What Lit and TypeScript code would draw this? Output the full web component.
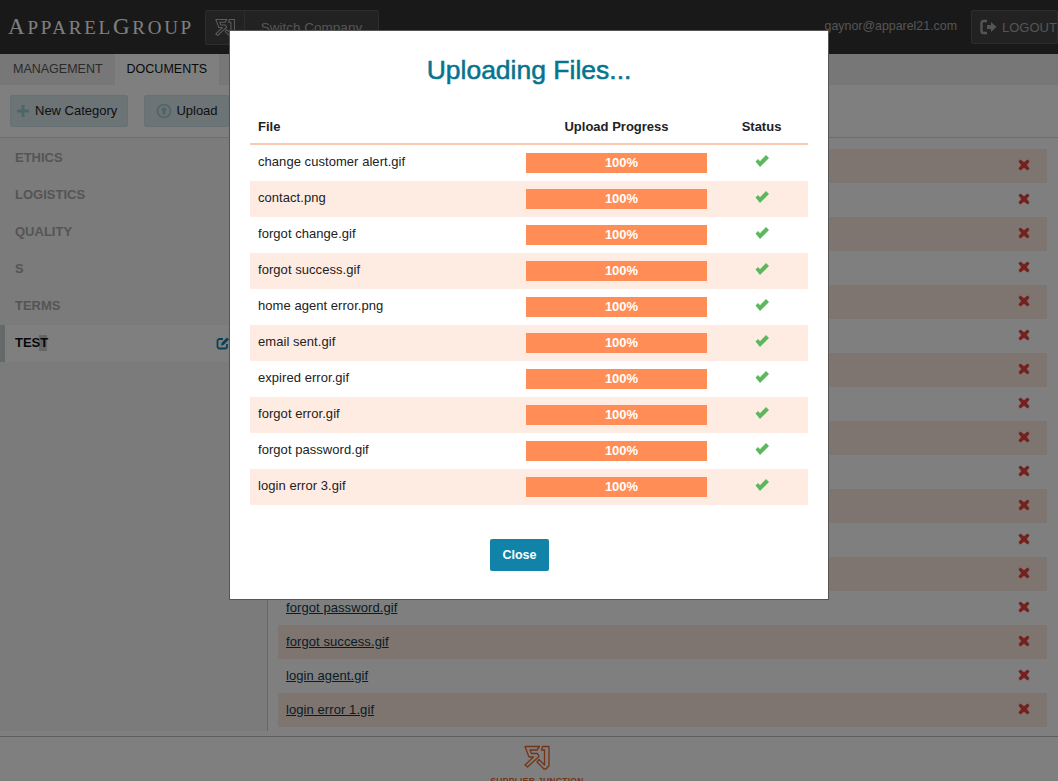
import { LitElement, html, css, svg } from "lit";
import { customElement } from "lit/decorators.js";

const logoMark = svg`<path d="M1 1.5H15.5L13 5H6L7.5 8.5H13.5L15 11.5L3.5 22L1 20L9.5 12H5Z" fill="none" stroke="currentColor" stroke-width="1.3" stroke-linejoin="round"/><path d="M18.5 1.5H25V20.5L22 24H20L13 17L15 14.5L20.5 20V5H17.5Z" fill="none" stroke="currentColor" stroke-width="1.3" stroke-linejoin="round"/>`;

const BG_FILES = [
  "change customer alert.gif", "contact.png", "forgot change.gif", "forgot error.gif", "home agent error.png",
  "email sent.gif", "expired error.gif", "forgot error 2.gif", "home agent.png", "login error 2.gif",
  "login error 3.gif", "login.gif", "logo.png", "forgot password.gif", "forgot success.gif", "login agent.gif", "login error 1.gif",
];
const UPLOADS = [
  "change customer alert.gif", "contact.png", "forgot change.gif", "forgot success.gif", "home agent error.png",
  "email sent.gif", "expired error.gif", "forgot error.gif", "forgot password.gif", "login error 3.gif",
];
const CATS = ["ETHICS", "LOGISTICS", "QUALITY", "S", "TERMS"];

@customElement("app-root")
export class AppRoot extends LitElement {
  static styles = css`
    :host { display: block; position: relative; height: 781px; overflow: hidden; background: #fff; font-family: "Liberation Sans", Arial, sans-serif; color: #222; font-size: 13px; }
    .top { height: 54px; background: #323232; display: flex; align-items: center; padding: 0 0 0 8px; color: #ddd; }
    .brand { font-family: "Liberation Serif", serif; font-size: 19px; letter-spacing: 2.75px; color: #fff; width: 197px; line-height: 54px; white-space: nowrap; }
    .brand b { font-weight: normal; font-size: 23px; }
    .switch { display: flex; height: 33px; border: 1px solid #5a5a5a; border-radius: 2px; background: #444; }
    .switch .mark { width: 39px; display: flex; align-items: flex-start; justify-content: center; padding-top: 7px; box-sizing: border-box; border-right: 1px solid #5a5a5a; color: #bbb; }
    .switch .label { width: 133px; text-align: center; line-height: 33px; font-size: 13.5px; color: #aaa; }
    .spacer { flex: 1; }
    .user { font-size: 12.4px; color: #aaa; margin-right: 14px; margin-top: -2px; }
    .logout { width: 87px; height: 34px; border: 1px solid #5a5a5a; border-radius: 2px; background: #444; display: flex; align-items: center; gap: 4px; padding-left: 8px; font-size: 13px; color: #aaa; box-sizing: border-box; flex: none; white-space: nowrap; }
    .logout svg { flex: none; }
    .tabs { height: 31px; background: #eee; display: flex; font-size: 12.5px; }
    .tab { padding: 0 12px 0 13px; line-height: 31px; color: #555; }
    .tab.on { background: #fff; color: #111; width: 104px; box-sizing: border-box; padding: 0 12px; }
    .tools { height: 53px; box-sizing: border-box; border-bottom: 1px solid #ddd; display: flex; align-items: flex-start; padding: 10px 0 0 10px; gap: 16px; }
    .btn { height: 32px; box-sizing: border-box; background: #d9e8ec; border: 1px solid #cfe0e5; border-radius: 2px; display: flex; align-items: center; gap: 6px; padding: 0 10px 2px 6px; font-size: 13px; color: #222; white-space: nowrap; }
    .btn svg { margin-top: 2px; }
    .btn.up { padding-left: 11px; gap: 4px; }
    .body { display: flex; height: 593px; }
    .side { width: 267px; border-right: 1px solid #ccc; padding-top: 2px; height: 591px; flex: none; background: #f7f7f7; }
    .cat { height: 37px; line-height: 36px; padding-left: 15px; font-size: 13px; font-weight: bold; color: #aaa; box-sizing: border-box; }
    .cat.on { background: #fff; border-left: 5px solid #ccd3d3; padding-left: 10px; color: #111; display: flex; justify-content: space-between; }
    .name { position: relative; }
    .sel { position: absolute; left: 24px; top: 10px; width: 8px; height: 16px; background: rgba(0, 0, 0, 0.2); }
    .edit { margin: 11px 37px 0 0; color: #0e83a8; }
    .main { flex: 1; padding: 11px 11px 0 10px; }
    .row { height: 34px; display: flex; align-items: center; justify-content: space-between; padding: 0 17px 0 8px; }
    .row:nth-child(odd) { background: #ffeae0; }
    .row a { color: #0f3a4c; text-decoration: underline; font-size: 13px; letter-spacing: 0.08px; margin-top: -2px; }
    .x { color: #e8453f; display: flex; margin-top: -2px; }
    .foot { border-top: 1px solid #bbb; margin-top: 5px; height: 60px; display: flex; flex-direction: column; align-items: center; padding: 8px 0 0 16px; color: #e8682a; box-sizing: border-box; }
    .foot .sj { font-size: 8.5px; font-weight: bold; margin-top: 6px; white-space: nowrap; letter-spacing: 0.3px; }
    .veil { position: absolute; inset: 0; background: rgba(0, 0, 0, 0.5); }
    .modal { position: absolute; left: 229px; top: 30px; width: 600px; height: 570px; box-sizing: border-box; background: #fff; border: 1px solid #555; padding: 0 20px; display: flex; flex-direction: column; align-items: stretch; }
    h2 { margin: 20px 0 0; font-size: 26.5px; line-height: 38px; font-weight: normal; text-align: center; color: #07748f; -webkit-text-stroke: 0.55px #07748f; }
    table { border-collapse: separate; border-spacing: 0; width: 558px; margin-top: 20px; table-layout: fixed; }
    th { height: 36px; box-sizing: border-box; padding: 0; font-size: 13px; font-weight: bold; color: #222; border-bottom: 2px solid #f9c9b0; }
    th.f { text-align: left; padding-left: 8px; }
    th.s, td.s { padding-left: 8px; }
    td { height: 36px; padding: 0; font-size: 13px; color: #222; box-sizing: border-box; vertical-align: middle; }
    td.f { padding: 0 0 4px 8px; letter-spacing: 0.05px; }
    tbody tr:nth-child(even) { background: #feece2; }
    .bar { width: 181px; height: 20px; box-sizing: border-box; padding-left: 10px; background: #ff8d55; color: #fff; font-size: 13px; font-weight: bold; text-align: center; line-height: 20px; }
    .ok { display: block; margin: -4px auto 0; color: #5cb85c; }
    .close { align-self: flex-start; margin: 34px 0 0 240px; width: 59px; height: 32px; background: #1182a8; color: #fff; border: 0; border-radius: 2px; font: bold 12.5px "Liberation Sans", Arial, sans-serif; padding: 0; }
  `;

  render() {
    return html`
      <div class="top">
        <div class="brand"><b>A</b>PPAREL<b>G</b>ROUP</div>
        <div class="switch">
          <div class="mark"><svg width="21" height="20" viewBox="0 0 27 25">${logoMark}</svg></div>
          <div class="label">Switch Company</div>
        </div>
        <div class="spacer"></div>
        <div class="user">gaynor@apparel21.com</div>
        <div class="logout">
          <svg width="18" height="16" viewBox="0 0 18 16"><path d="M7 2H3.5A2 2 0 0 0 1.5 4V12A2 2 0 0 0 3.5 14H7" fill="none" stroke="currentColor" stroke-width="2.4"/><path d="M7 6H11V3L16.5 8L11 13V10H7Z" fill="currentColor"/></svg>
          LOGOUT
        </div>
      </div>
      <div class="tabs">
        <div class="tab">MANAGEMENT</div>
        <div class="tab on">DOCUMENTS</div>
      </div>
      <div class="tools">
        <div class="btn">
          <svg width="12" height="12" viewBox="0 0 12 12"><path d="M4.5 0H7.5V4.5H12V7.5H7.5V12H4.5V7.5H0V4.5H4.5Z" fill="#9cc8d3"/></svg>
          New Category
        </div>
        <div class="btn up">
          <svg width="16" height="16" viewBox="0 0 16 16"><circle cx="8" cy="8" r="6.5" fill="none" stroke="#9cc8d3" stroke-width="1.6"/><path d="M8 3.8L11.5 7.6H9.5V11.5H6.5V7.6H4.5Z" fill="#9cc8d3"/></svg>
          Upload
        </div>
      </div>
      <div class="body">
        <div class="side">
          ${CATS.map((c) => html`<div class="cat">${c}</div>`)}
          <div class="cat on"><span class="name">TEST<span class="sel"></span></span>
            <svg class="edit" width="14" height="14" viewBox="0 0 14 14"><path d="M11 8V10.5A2 2 0 0 1 9 12.5H3.5A2 2 0 0 1 1.5 10.5V5A2 2 0 0 1 3.5 3H7" fill="none" stroke="currentColor" stroke-width="1.8"/><path d="M5 9.5L5.5 7L11 1.5L13 3.5L7.5 9Z" fill="currentColor"/></svg>
          </div>
        </div>
        <div class="main">
          ${BG_FILES.map((f) => html`<div class="row"><a>${f}</a><span class="x"><svg width="12" height="12" viewBox="0 0 12 12"><path d="M2.4 .5L6 3.2L9.6 .5L11.6 2.5L8.8 6L11.6 9.5L9.6 11.5L6 8.8L2.4 11.5L.4 9.5L3.2 6L.4 2.5Z" fill="currentColor"/></svg></span></div>`)}
        </div>
      </div>
      <div class="foot">
        <svg width="27" height="25" viewBox="0 0 27 25">${logoMark}</svg>
        <div class="sj">SUPPLIER JUNCTION</div>
      </div>
      <div class="veil"></div>
      <div class="modal">
        <h2>Uploading Files...</h2>
        <table>
          <colgroup><col style="width:276px"/><col style="width:181px"/><col/></colgroup>
          <thead><tr><th class="f">File</th><th>Upload Progress</th><th class="s">Status</th></tr></thead>
          <tbody>
            ${UPLOADS.map((f) => html`<tr>
              <td class="f">${f}</td>
              <td><div class="bar">100%</div></td>
              <td class="s"><svg class="ok" width="14" height="12" viewBox="0 0 14 12"><path d="M.5 6.5L3 4L5 6.2L11 0L14 3L5 12Z" fill="currentColor"/></svg></td>
            </tr>`)}
          </tbody>
        </table>
        <button class="close">Close</button>
      </div>
    `;
  }
}
